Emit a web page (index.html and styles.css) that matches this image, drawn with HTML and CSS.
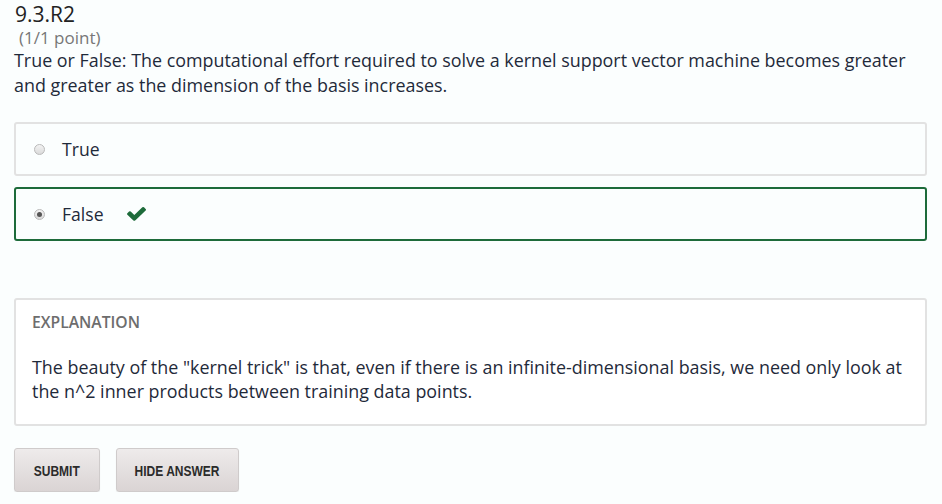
FILE: index.html
```html
<!DOCTYPE html>
<html>
<head>
<meta charset="utf-8">
<link rel="stylesheet" href="styles.css">
</head>
<body>
<div class="problem">
  <h3 class="title">9.3.R2</h3>
  <div class="points">(1/1 point)</div>
  <p class="question">True or False: The computational effort required to solve a kernel support vector machine becomes greater and greater as the dimension of the basis increases.</p>
  <div class="choices">
    <label class="choice">
      <span class="radio"></span>
      <span class="choice-text">True</span>
    </label>
    <label class="choice correct">
      <span class="radio checked"></span>
      <span class="choice-text">False</span>
      <svg class="check" width="19" height="14" viewBox="117 330 1554 1204" preserveAspectRatio="none"><path d="M1671 566q0 40-28 68l-724 724-136 136q-28 28-68 28t-68-28l-136-136-362-362q-28-28-28-68t28-68l136-136q28-28 68-28t68 28l294 295 656-657q28-28 68-28t68 28l136 136q28 28 28 68z" fill="#1d6b3a"/></svg>
    </label>
  </div>
  <div class="explanation">
    <div class="exp-label">EXPLANATION</div>
    <p class="exp-text">The beauty of the "kernel trick" is that, even if there is an infinite-dimensional basis, we need only look at the n^2 inner products between training data points.</p>
  </div>
  <div class="actions">
    <button class="btn btn-submit"><span class="btn-label">SUBMIT</span></button>
    <button class="btn btn-hide"><span class="btn-label">HIDE ANSWER</span></button>
  </div>
</div>
</body>
</html>
```
FILE: styles.css
```css
html, body {
  margin: 0;
  padding: 0;
  background: #fbfefe;
}
body {
  font-family: "Open Sans", "DejaVu Sans", sans-serif;
  color: #1f2a3a;
}
.problem {
  padding: 0 15px 0 14px;
}
.title {
  margin: 0;
  padding-top: 1px;
  font-size: 21px;
  font-weight: 400;
  line-height: 27px;
  color: #222;
  padding-left: 1px;
}
.points {
  font-size: 17px;
  line-height: 20px;
  color: #777;
  padding-left: 5px;
}
.question {
  margin: 0;
  font-size: 17.9px;
  line-height: 25px;
  color: #1f2a3a;
}
.choices {
  margin-top: 24px;
  display: flex;
  flex-direction: column;
  gap: 11px;
}
.choice {
  display: flex;
  align-items: center;
  height: 50px;
  border: 2px solid #e2e2e2;
  border-radius: 3px;
  background: #fbfefe;
  padding-left: 18px;
  font-size: 17.6px;
}
.choice.correct {
  border-color: #1d6b3a;
}
.radio {
  width: 11px;
  height: 11px;
  border-radius: 50%;
  border: 1px solid #b9b9b9;
  background: linear-gradient(#f3f3f3, #dadada);
  box-sizing: border-box;
  display: flex;
  align-items: center;
  justify-content: center;
  margin-right: 17px;
  margin-top: 1px;
}
.radio.checked::after {
  content: "";
  width: 5px;
  height: 5px;
  border-radius: 50%;
  background: #555;
}
.choice-text {
  color: #1f2a3a;
}
.check {
  margin-left: 23px;
  margin-top: 0;
}
.explanation {
  margin-top: 57px;
  border: 2px solid #e2e2e2;
  border-radius: 3px;
  background: #fff;
  padding: 12px 16px 21px;
}
.exp-label {
  font-size: 15.7px;
  font-weight: 600;
  color: #6d6d6d;
  line-height: 20px;
}
.exp-text {
  margin: 23px 0 0;
  font-size: 17.9px;
  line-height: 24px;
  color: #1f2a3a;
}
.actions {
  margin-top: 22px;
  display: flex;
  gap: 16px;
}
.btn {
  height: 44px;
  padding: 0;
  border: 1px solid #cfcbcb;
  border-radius: 3px;
  background: linear-gradient(#eeebeb, #dad4d4);
  font-family: "Liberation Sans", Arial, sans-serif;
  font-weight: 700;
  font-size: 15px;
  color: #2b2b2b;
  box-shadow: 0 1px 1px rgba(0,0,0,0.08);
  display: flex;
  align-items: center;
  justify-content: center;
}
.btn-submit {
  width: 86px;
}
.btn-hide {
  width: 123px;
}
.btn-label {
  display: inline-block;
  transform: scaleX(0.8);
  white-space: nowrap;
}
```
